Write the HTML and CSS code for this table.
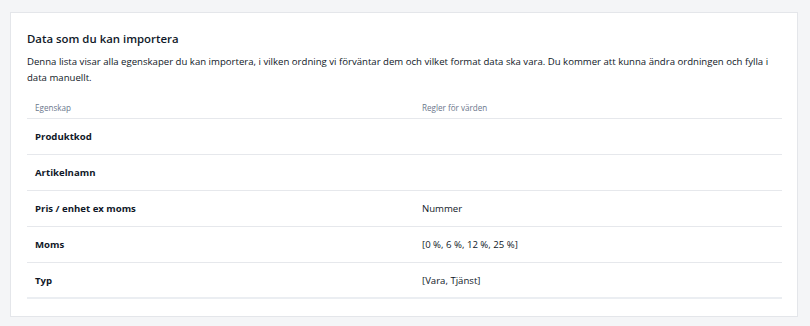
FILE: index.html
```html
<!DOCTYPE html>
<html lang="sv">
<head>
<meta charset="utf-8">
<title>Importera data</title>
<link rel="stylesheet" href="styles.css">
</head>
<body>
<section class="card">
  <h2 class="card-title">Data som du kan importera</h2>
  <p class="card-intro">Denna lista visar alla egenskaper du kan importera, i vilken ordning vi förväntar dem och vilket format data ska vara. Du kommer att kunna ändra ordningen och fylla i data manuellt.</p>
  <table class="props">
    <thead>
      <tr><th class="col-name">Egenskap</th><th>Regler för värden</th></tr>
    </thead>
    <tbody>
      <tr><td class="prop">Produktkod</td><td></td></tr>
      <tr><td class="prop">Artikelnamn</td><td></td></tr>
      <tr><td class="prop">Pris / enhet ex moms</td><td>Nummer</td></tr>
      <tr><td class="prop">Moms</td><td>[0 %, 6 %, 12 %, 25 %]</td></tr>
      <tr><td class="prop">Typ</td><td>[Vara, Tjänst]</td></tr>
    </tbody>
  </table>
</section>
</body>
</html>
```
FILE: styles.css
```css
* { box-sizing: border-box; }

body {
  margin: 0;
  padding: 12px 12px 0 10px;
  background: #f4f5f7;
  font-family: "Open Sans", "Liberation Sans", sans-serif;
  color: #101828;
}

.card {
  background: #fff;
  border: 1px solid #e4e6ea;
  padding: 18px 15px 16px 16px;
  height: 305px;
}

.card-title {
  margin: 0 0 7px;
  font-size: 11.4px;
  font-weight: 600;
  line-height: 16px;
}

.card-intro {
  margin: 0 0 4px;
  font-size: 9.6px;
  line-height: 16px;
}

.props {
  width: 100%;
  border-collapse: collapse;
  font-size: 9.6px;
}

.props th {
  text-align: left;
  font-weight: 400;
  font-size: 8.1px;
  color: #6b778c;
  padding: 7px 8px 0;
  height: 28px;
  border-bottom: 1px solid #e6e8ec;
}

.props .col-name { width: 387px; }

.props td {
  height: 36px;
  padding: 1px 8px 0;
  border-bottom: 1px solid #e6e8ec;
  vertical-align: middle;
}

.props tbody tr:last-child td { border-bottom: 2px solid #ebeef2; }

.props .prop { font-weight: 700; }
```
